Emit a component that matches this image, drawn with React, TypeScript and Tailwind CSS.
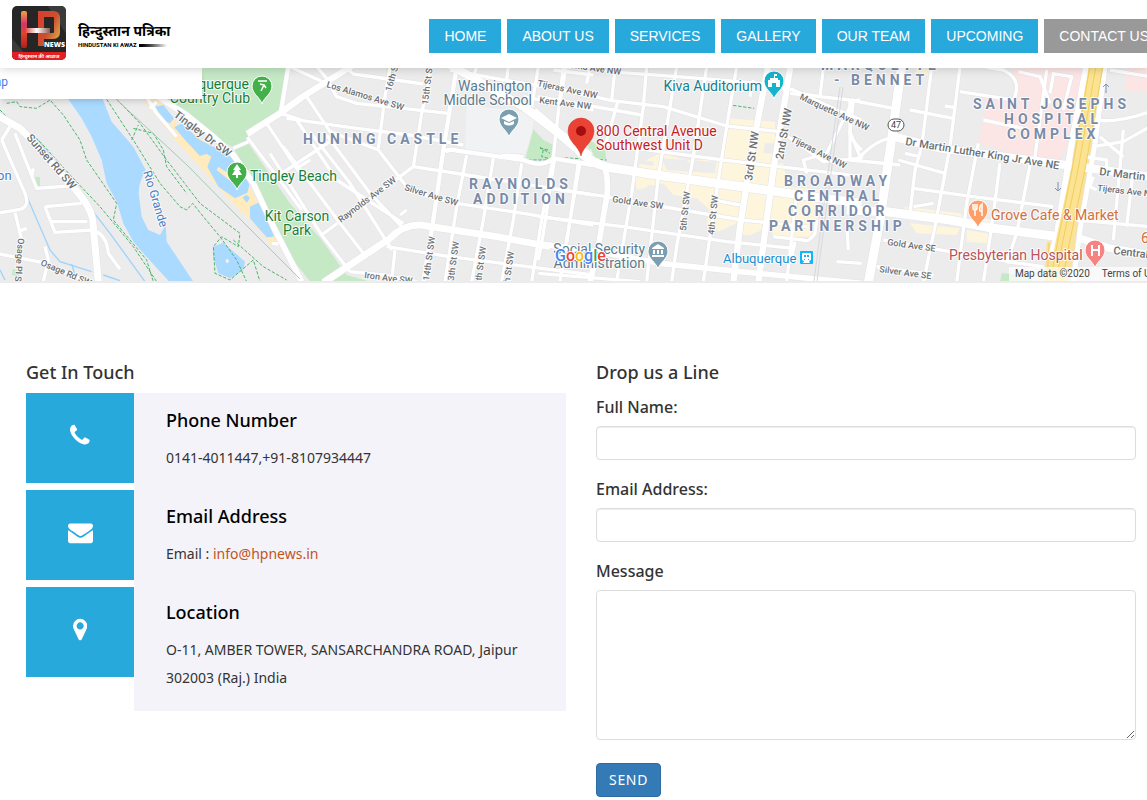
type Area = [fill: string, d: string];
type Road = [width: number, d: string];

interface Tile {
  x: number;
  areas: Area[];
  roads: Road[];
  streams?: string;
  trails?: string;
}

interface Label {
  text: string;
  x: number;
  y: number;
  size?: number;
  color?: string;
  rotate?: number;
  spacing?: number;
  anchor?: "start" | "middle" | "end";
  weight?: number;
}

const WATER = "#aadaff";
const PARK = "#c5e8c5";
const SAND = "#ffebbe";
const SHOPS = "#fdf5dc";
const CLINIC = "#fce5e5";

const ROAD_TEXT = "#6b7074";
const AREA_TEXT = "#7a8ba8";
const PARK_TEXT = "#188038";
const PLACE_TEXT = "#5b7a8c";

// every tile is drawn on a grid three times finer than the map
const tiles: Tile[] = [
  {
    x: 0,
    areas: [
      [WATER, "M200 110L245 175L275 230L305 300L320 370L350 425L370 490L400 545L430 580L508 665H580L500 545L497 495L480 525L445 510L425 470L416 400Q415 370 437 330L400 260L335 185L305 110Z"],
      [PARK, "M600 20H860L838 160L742 222L748 248L700 262L640 230L560 165L490 110Z"],
      [PARK, "M700 262L745 250L870 430L965 540L1040 645L1110 665H930L880 600L810 470L760 370Z"],
      [SAND, "M430 112L480 118L530 190L600 235L700 300L760 400L820 520L835 550L815 558L770 500L680 410L600 320L520 235L440 135Z"],
      [WATER, "M465 140L490 135L522 175L510 190L480 175ZM523 202L545 190L600 240L660 270L715 305L748 375L742 398L705 415L655 380L622 320L634 290L620 282L600 288L560 245ZM750 440L775 428L800 470L822 530L800 532L750 475ZM728 412L740 405L750 414L740 428Z"],
      [SAND, "M655 320L700 350L690 362L650 330Z"],
      [WATER, "M640 560L670 548L735 605L730 630L690 655L655 640L640 590Z"],
      ["#f0f0f0", "M676 600L684 596L688 606L680 610Z"],
      [PARK, "M105 350L120 352L120 382L108 375ZM38 628L60 632L58 650L36 645Z"],
    ],
    roads: [
      [20, "M-10 165L60 205L85 230L200 360Q270 430 278 480L295 665"],
      [9, "M45 220L110 385L205 378M5 240L75 400Q90 440 60 448L-10 460M45 458L65 540M62 512L80 505M135 440L245 430M135 440L165 517L275 510Q320 520 325 580L360 628M150 485L262 485M-10 580L140 610L260 665M135 560L145 600L130 665M5 240L30 200M95 350L100 325"],
      [16, "M470 108L560 165L640 230L700 285L760 370L820 500L905 665"],
      [10, "M440 112L470 160L530 230M450 145L470 125"],
      [12, "M865 20L842 160"],
      [18, "M742 222L840 160L905 112L1060 15"],
      [9, "M742 232L850 375L905 450M800 190L890 325L905 345M842 160L905 180M700 265L745 245M815 550L835 552M870 20L1000 80M890 325L930 300"],
    ],
    streams: "M5 235L150 570L180 605L275 635M110 235L330 520L435 665M0 630L15 660M310 645L360 662M215 612L225 645",
    trails:
      "M0 150L20 170L120 245L215 350L300 440L400 560L470 665M20 130L50 125L60 140L110 145L150 120L190 165L240 240L260 300L350 430L340 480L440 600L460 665M320 118L400 240L480 370L540 440L560 450L578 430L610 470L660 530L710 600L740 665M350 118L420 190L500 300L600 430L720 520L715 560L665 530L640 560L645 640L690 660L760 600L780 665M400 205L460 220L490 270L500 320L560 400M395 240L415 195M700 540L790 620L860 660",
  },
  {
    x: 290,
    areas: [
      ["#f1f2f4", "M530 135L735 160L725 220L702 292L525 272Z"],
      [PARK, "M730 208L760 240L790 255L785 300L705 300Z"],
      [PARK, "M290 22H315L305 60L290 80ZM530 30L562 38V58L535 50ZM895 240L915 250V270L895 265Z"],
    ],
    roads: [
      [20, "M100 668L300 535Q350 485 410 498L620 530L780 560"],
      [9, "M-10 175L200 205L360 225L520 255M110 60L140 110L200 130L475 160M80 20L110 55M165 20L190 42L400 72M50 110L120 215L265 270L350 380Q400 412 500 430L700 460L910 495M20 180L140 360L340 490M-60 280L95 525L180 635M-20 260L150 490L220 580M60 215L180 370L290 545M110 225L240 400L335 500M-40 350L150 225M95 525L370 320L530 345L910 405M330 465L350 450M290 560L480 590L910 645M315 570L305 665M180 635L280 645L380 665M290 540L305 570"],
      [9, "M300 20L285 110L265 265M425 20L395 160L370 320M530 285L500 440L465 665M610 295L580 480L545 665M695 310L670 480L635 665M790 290L755 480L725 665M865 310L840 480L830 550M820 20L790 290M745 20L725 140M655 20L650 60M560 20L550 50"],
      [12, "M500 20L460 270L430 480L400 665"],
      [12, "M465 275Q480 265 500 272L700 300Q760 325 790 295L910 315M625 295Q640 280 700 292"],
      [9, "M480 30L640 60L760 80L910 110M700 110L910 150M790 30L910 45"],
      [24, "M480 15L700 140L800 215L900 290"],
    ],
    trails: "M700 300L785 300L900 310M750 265L775 270M760 270L755 290L775 295",
  },
  {
    x: 540,
    areas: [
      [SHOPS, "M560 175L705 185V240L700 310H730L745 380L840 390L835 470L820 530L700 530L690 500L630 525L600 525L610 480L535 515L500 490L510 450L470 415L400 405L370 370L290 390L285 350L300 310L360 280L440 300L540 300ZM365 295L380 330L525 340L530 300L460 320L440 300Z"],
      ["#ececed", "M675 250H705V280H670ZM300 300L340 305V318L290 310ZM455 300L510 305L480 320L455 318ZM320 375L330 390H280L285 402H360L350 378Z"],
      [PARK, "M145 245L195 265L198 298L165 295ZM-5 240L20 260L40 300L-5 300Z"],
    ],
    roads: [
      [9, "M-5 75L100 95L215 122L370 140L560 198L720 215L775 250L850 305L965 295M-5 110L305 165M125 25L250 38L480 55L660 70L760 90L870 140L965 180M185 250L360 275L550 300L870 338L965 350M-5 380L200 410L340 435L605 480L800 500M-5 470L250 500L560 545L760 565M-5 640L300 665M520 420L600 435M215 122L225 25"],
      [9, "M78 20L60 130M45 290L10 520L-5 600M120 310L80 540L60 665M150 25L140 70M235 120L195 260M320 20L310 140L275 400L230 665M410 20L365 290L355 350L320 665M500 20L460 290L410 560L395 665M590 20L560 200L535 360L490 665M850 25L840 110L780 100M770 400L740 665M640 60L630 110M830 480L825 520Q805 550 790 540L700 530M750 100L930 120M960 120L925 125M800 340L790 300L860 280L940 120L930 220Q940 250 965 270M920 490L925 570M890 605L965 610M765 545L755 595"],
      [16, "M-10 550L200 580L360 610L600 635L965 670"],
      [16, "M195 320Q210 380 195 440L175 560L150 668"],
      [18, "M685 15L640 250L600 500L580 668M752 15L700 330L655 668"],
      [26, "M-20 155L110 265Q160 320 230 326L350 345L640 385L850 415L965 430"],
    ],
    trails: "M575 100L570 135L642 145M570 135L562 195M45 292L200 300M135 265L160 320M0 262L30 280",
  },
  {
    x: 850,
    areas: [
      [CLINIC, "M490 22L700 22L660 240L630 298L555 295L520 285L395 255L385 240L400 180L410 110L490 120ZM830 22H900V95H825Z"],
      [SHOPS, "M165 440L330 460L345 480L165 465ZM180 490L330 505L320 525L200 520ZM350 510L420 522L415 550L350 545ZM370 470L430 480L425 495L370 490ZM200 22L245 30V50L195 40Z"],
      [PARK, "M455 640L540 645L545 668H450Z"],
      ["#fae29c", "M705 20H772L728 300L692 480L655 668H582L590 545H632L665 330Z"],
    ],
    roads: [
      [9, "M0 120L130 145M180 150L310 175M285 138L310 142M245 22L215 260L195 330L180 460M330 20L300 260L255 500L220 668M330 95L490 120Q520 60 460 30L410 22M385 250L350 430L320 668M400 180L520 205M450 310L425 500L400 668M545 290L500 520L470 610M145 300L285 340M190 385L370 410L610 440M0 300L150 315M165 280L210 290M100 540L300 575L480 605M80 620L250 645M590 30L555 290M505 35L570 50L600 130M605 40L665 50L640 150M600 100L610 45M0 215L30 290Q80 240 120 235M0 120L0 300L40 290M470 605L580 620M250 430L190 440M680 480L900 500M820 210L790 540M735 180Q800 190 900 155M730 260L820 245L900 200M700 290L770 300V330M730 350L720 380L740 390M780 30L900 50M750 230L820 290M850 330L830 500"],
      [14, "M765 20L735 250L690 510L670 668"],
      [18, "M710 15L665 250L620 530L600 600"],
      [26, "M155 15L130 200L90 480L55 668"],
      [24, "M130 230L270 265L500 295L700 322L900 350"],
      [26, "M-10 450L110 455L300 480L430 505L630 530"],
      [22, "M690 535L780 565L900 585"],
    ],
  },
];

const labels: Label[] = [
  { text: "HUNING CASTLE", x: 303, y: 144, color: AREA_TEXT, spacing: 4, weight: 700 },
  { text: "RAYNOLDS", x: 469, y: 189, color: AREA_TEXT, spacing: 4, weight: 700 },
  { text: "ADDITION", x: 473, y: 204, color: AREA_TEXT, spacing: 4, weight: 700 },
  { text: "BROADWAY", x: 784, y: 186, color: AREA_TEXT, spacing: 4, weight: 700 },
  { text: "CENTRAL", x: 794, y: 201, color: AREA_TEXT, spacing: 4, weight: 700 },
  { text: "CORRIDOR", x: 788, y: 216, color: AREA_TEXT, spacing: 4, weight: 700 },
  { text: "PARTNERSHIP", x: 769, y: 231, color: AREA_TEXT, spacing: 4, weight: 700 },
  { text: "MARQUETTE", x: 821, y: 70, color: AREA_TEXT, spacing: 4, weight: 700 },
  { text: "- BENNET", x: 834, y: 85, color: AREA_TEXT, spacing: 4, weight: 700 },
  { text: "SAINT JOSEPHS", x: 973, y: 109, color: AREA_TEXT, spacing: 4, weight: 700 },
  { text: "HOSPITAL", x: 1004, y: 124, color: AREA_TEXT, spacing: 4, weight: 700 },
  { text: "COMPLEX", x: 1007, y: 139, color: AREA_TEXT, spacing: 4, weight: 700 },
  { text: "Albuquerque", x: 249, y: 89, color: PARK_TEXT, size: 14, anchor: "end" },
  { text: "Country Club", x: 250, y: 103, color: PARK_TEXT, size: 14, anchor: "end" },
  { text: "Tingley Beach", x: 250, y: 181, color: PARK_TEXT, size: 14 },
  { text: "Kit Carson", x: 297, y: 221, color: PARK_TEXT, size: 14, anchor: "middle" },
  { text: "Park", x: 297, y: 235, color: PARK_TEXT, size: 14, anchor: "middle" },
  { text: "Washington", x: 532, y: 91, color: PLACE_TEXT, size: 14, anchor: "end" },
  { text: "Middle School", x: 532, y: 105, color: PLACE_TEXT, size: 14, anchor: "end" },
  { text: "Social Security", x: 645, y: 254, color: PLACE_TEXT, size: 14, anchor: "end" },
  { text: "Administration", x: 645, y: 268, color: PLACE_TEXT, size: 14, anchor: "end" },
  { text: "Kiva Auditorium", x: 762, y: 91, color: "#12808d", size: 14, anchor: "end" },
  { text: "800 Central Avenue", x: 596, y: 136, color: "#c5221f", size: 14 },
  { text: "Southwest Unit D", x: 596, y: 150, color: "#c5221f", size: 14 },
  { text: "Albuquerque", x: 723, y: 263, color: "#1a8fd1", size: 13 },
  { text: "Grove Cafe & Market", x: 991, y: 220, color: "#d0703c", size: 14 },
  { text: "Presbyterian Hospital", x: 949, y: 260, color: "#b8545a", size: 14 },
  { text: "6", x: 1141, y: 243, color: "#d0703c", size: 14 },
  { text: "on", x: -3, y: 180, color: "#4a7cc0", size: 13 },
  { text: "Rio Grande", x: 143, y: 172, color: "#4a7cc0", size: 12, rotate: 73 },
  { text: "Sunset Rd SW", x: 26, y: 138, size: 11, rotate: 49 },
  { text: "Tingley Dr SW", x: 173, y: 116, size: 11, rotate: 37 },
  { text: "Osage Rd SW", x: 40, y: 265, size: 9, rotate: 23 },
  { text: "Osage Pl SW", x: 18, y: 238, size: 9, rotate: 94 },
  { text: "Los Alamos Ave SW", x: 326, y: 87, size: 9, rotate: 17 },
  { text: "Raynolds Ave SW", x: 341, y: 223, size: 9, rotate: -37 },
  { text: "Silver Ave SW", x: 404, y: 190, size: 9, rotate: 17 },
  { text: "16th St", x: 391, y: 92, size: 9, rotate: -74 },
  { text: "15th St S", x: 428, y: 105, size: 9, rotate: -83 },
  { text: "14th St SW", x: 429, y: 281, size: 9, rotate: -82 },
  { text: "13th St SW", x: 453, y: 286, size: 9, rotate: -82 },
  { text: "12th St SW", x: 480, y: 291, size: 9, rotate: -82 },
  { text: "11th St SW", x: 508, y: 296, size: 9, rotate: -82 },
  { text: "Iron Ave SW", x: 364, y: 278, size: 9, rotate: 7 },
  { text: "Tijeras Ave NW", x: 537, y: 86, size: 9, rotate: 12 },
  { text: "Kent Ave NW", x: 539, y: 103, size: 9, rotate: 7 },
  { text: "Roma Ave NW", x: 564, y: 67, size: 9, rotate: 8 },
  { text: "Gold Ave SW", x: 612, y: 202, size: 9, rotate: 8 },
  { text: "5th St SW", x: 686, y: 231, size: 9, rotate: -84 },
  { text: "4th St SW", x: 714, y: 235, size: 9, rotate: -84 },
  { text: "3rd St NW", x: 752, y: 181, size: 11, rotate: -82 },
  { text: "2nd St NW", x: 783, y: 160, size: 11, rotate: -80 },
  { text: "Marquette Ave NW", x: 799, y: 99, size: 9, rotate: 25 },
  { text: "Tijeras Ave NW", x: 790, y: 141, size: 9, rotate: 27 },
  { text: "Dr Martin Luther King Jr Ave NE", x: 905, y: 145, size: 11, rotate: 9 },
  { text: "Dr Martin Luther King", x: 1099, y: 175, size: 11, rotate: 7 },
  { text: "Tijeras Ave NE", x: 1097, y: 191, size: 9, rotate: 6 },
  { text: "Gold Ave SE", x: 887, y: 245, size: 9, rotate: 8 },
  { text: "Silver Ave SE", x: 879, y: 272, size: 9, rotate: 8 },
  { text: "Central Ave", x: 1113, y: 254, size: 11, rotate: 7 },
];

const navItems = [
  "HOME",
  "ABOUT US",
  "SERVICES",
  "GALLERY",
  "OUR TEAM",
  "UPCOMING",
  "CONTACT US",
];

const icons = {
  phone: {
    width: 1408,
    d: "M1408 296q0 -27 -10 -70.5t-21 -68.5q-21 -50 -122 -106q-94 -51 -186 -51q-27 0 -53 3.5t-57.5 12.5t-47 14.5t-55.5 20.5t-49 18q-98 35 -175 83q-127 79 -264 216t-216 264q-48 77 -83 175q-3 9 -18 49t-20.5 55.5t-14.5 47t-12.5 57.5t-3.5 53q0 92 51 186q56 101 106 122q25 11 68.5 21t70.5 10q14 0 21 -3q18 -6 53 -76q11 -19 30 -54t35 -63.5t31 -53.5q3 -4 17.5 -25t21.5 -35.5t7 -28.5q0 -20 -28.5 -50t-62 -55t-62 -53t-28.5 -46q0 -9 5 -22.5t8.5 -20.5t14 -24t11.5 -19q76 -137 174 -235t235 -174q2 -1 19 -11.5t24 -14t20.5 -8.5t22.5 -5q18 0 46 28.5t53 62t55 62t50 28.5q14 0 28.5 -7t35.5 -21.5t25 -17.5q25 -15 53.5 -31t63.5 -35t54 -30q70 -35 76 -53q3 -7 3 -21z",
  },
  envelope: {
    width: 1792,
    d: "M1792 826v-794q0 -66 -47 -113t-113 -47h-1472q-66 0 -113 47t-47 113v794q44 -49 101 -87q362 -246 497 -345q57 -42 92.5 -65.5t94.5 -48t110 -24.5h1h1q51 0 110 24.5t94.5 48t92.5 65.5q170 123 498 345q57 39 100 87zM1792 1120q0 -79 -49 -151t-122 -123q-376 -261 -468 -325q-10 -7 -42.5 -30.5t-54 -38t-52 -32.5t-57.5 -27t-50 -9h-1h-1q-23 0 -50 9t-57.5 27t-52 32.5t-54 38t-42.5 30.5q-91 64 -262 182.5t-205 142.5q-62 42 -117 115.5t-55 136.5q0 78 41.5 130t118.5 52h1472q65 0 112.5 -47t47.5 -113z",
  },
  marker: {
    width: 1024,
    d: "M768 896q0 106 -75 181t-181 75t-181 -75t-75 -181t75 -181t181 -75t181 75t75 181zM1024 896q0 -109 -33 -179l-364 -774q-16 -33 -47.5 -52t-67.5 -19t-67.5 19t-46.5 52l-365 774q-33 70 -33 179q0 212 150 362t362 150t362 -150t150 -362z",
  },
};

function IconBox({ name }: { name: keyof typeof icons }) {
  const icon = icons[name];
  return (
    <div className="flex h-[90px] items-center justify-center bg-[#27a9dc] pb-1.5">
      <svg
        className="h-[25px] w-auto"
        viewBox={`0 -1536 ${icon.width} 1792`}
        fill="#fff"
        aria-hidden="true"
      >
        <path d={icon.d} transform="scale(1 -1)" />
      </svg>
    </div>
  );
}

function Pin({ x, y, color }: { x: number; y: number; color: string }) {
  return (
    <g transform={`translate(${x} ${y})`}>
      <path
        d="M0 18C-2 11 -10 8 -10 0A10 10 0 0 1 10 0C10 8 2 11 0 18Z"
        fill={color}
        stroke="#fff"
        strokeWidth="1"
      />
    </g>
  );
}

function CityMap() {
  return (
    <svg
      className="block h-[213px] w-full bg-[#ececed]"
      viewBox="0 68 1147 213"
      preserveAspectRatio="xMidYMid slice"
      role="img"
      aria-label="Map"
    >
      {tiles.map((tile) => (
        <g key={tile.x} transform={`translate(${tile.x} 60) scale(0.33333)`}>
          {tile.areas.map(([fill, d]) => (
            <path key={d} d={d} fill={fill} />
          ))}
        </g>
      ))}
      {tiles.map((tile) => (
        <g
          key={tile.x}
          transform={`translate(${tile.x} 60) scale(0.33333)`}
          fill="none"
        >
          {tile.streams && (
            <path d={tile.streams} stroke="#9fd3fb" strokeWidth="4" />
          )}
          {tile.trails && (
            <path
              d={tile.trails}
              stroke="#4db36c"
              strokeWidth="3"
              strokeDasharray="10 5"
            />
          )}
        </g>
      ))}
      {["casing", "surface"].map((layer) =>
        tiles.map((tile) => (
          <g
            key={layer + tile.x}
            transform={`translate(${tile.x} 60) scale(0.33333)`}
            fill="none"
            strokeLinejoin="round"
          >
            {tile.roads.map(([width, d]) => (
              <path
                key={d}
                d={d}
                stroke={layer === "casing" ? "#e2e2e6" : "#fff"}
                strokeWidth={layer === "casing" ? width + 4 : width + 1}
              />
            ))}
          </g>
        ))
      )}

      {/* canal, railway and the interstate */}
      <g fill="none">
        <path d="M117 100L187 165L247 226L300 279" stroke="#a3ccb0" />
        <path d="M840 87L827 180L814 281M843 87L830 180L817 281" stroke="#d6d8dc" />
        <path
          d="M1096 66L1078 170L1062 245L1056 283"
          stroke="#fbe391"
          strokeWidth="14"
        />
        <path
          d="M1090 66L1072 170L1057 245L1050 283M1096 66L1078 170L1062 245L1056 283M1103 66L1085 170L1069 245L1062 283M1049 243L1047 283"
          stroke="#f3cd62"
        />
        <path d="M1058 182V191M1055 188L1058 191L1061 188M1106 93V84M1103 87L1106 84L1109 87" stroke="#7f90b3" />
      </g>

      <rect x="888" y="119" width="16" height="12" rx="6" fill="#fff" stroke="#555" />

      <g fontFamily="Roboto, sans-serif" paintOrder="stroke" strokeLinejoin="round">
        {labels.map((label) => (
          <text
            key={`${label.text}${label.x}`}
            x={label.x}
            y={label.y}
            fontSize={label.size ?? 14}
            fontWeight={label.weight ?? (label.color ? 400 : 500)}
            fill={label.color ?? ROAD_TEXT}
            stroke="#fff"
            strokeOpacity="0.85"
            strokeWidth="2"
            letterSpacing={label.spacing}
            textAnchor={label.anchor ?? "start"}
            transform={
              label.rotate
                ? `rotate(${label.rotate} ${label.x} ${label.y})`
                : undefined
            }
          >
            {label.text}
          </text>
        ))}
        <text x="896" y="128" fontSize="9" textAnchor="middle" fill="#444">
          47
        </text>
        <text
          x="555"
          y="261"
          fontSize="16"
          fontWeight="500"
          stroke="#fff"
          strokeWidth="2"
        >
          <tspan fill="#4285f4">G</tspan>
          <tspan fill="#ea4335">o</tspan>
          <tspan fill="#fbbc05">o</tspan>
          <tspan fill="#4285f4">g</tspan>
          <tspan fill="#34a853">l</tspan>
          <tspan fill="#ea4335">e</tspan>
        </text>
      </g>

      <Pin x={262} y={86} color="#43b04a" />
      <path d="M258 81H267M260 84L264 85L261 91M264 85L266 88" stroke="#fff" strokeWidth="1.5" fill="none" />
      <Pin x={237} y={172} color="#43b04a" />
      <path d="M237 164L241 170H239L242 175H238V178H236V175H232L235 170H233Z" fill="#fff" />
      <Pin x={509} y={119} color="#7b9eb0" />
      <path d="M509 114L517 118L509 122L501 118ZM504 121L509 123L514 121V124Q509 127 504 124Z" fill="#fff" />
      <Pin x={658} y={251} color="#7b9eb0" />
      <path d="M652 248L658 244L664 248V249H652ZM653 250H655V254H653ZM657 250H659V254H657ZM661 250H663V254H661ZM652 255H664V257H652Z" fill="#fff" />
      <Pin x={774} y={81} color="#12b5cb" />
      <path d="M774 74H777V76H775V78H778V80H780V87H776V83H772V87H768V80H770V78H774Z" fill="#fff" />
      <Pin x={978} y={210} color="#ff9e67" />
      <path d="M973 204V208Q973 210 975 210V216M977 204V208Q977 210 975 210V204M982 216V204Q979 206 980 211H982" stroke="#fff" strokeWidth="1.5" fill="none" />
      <Pin x={1095} y={250} color="#f88181" />
      <path d="M1092 245V256M1099 245V256M1092 250H1099" stroke="#fff" strokeWidth="2" fill="none" />

      <rect x="800" y="251" width="13" height="13" rx="1" fill="#12b5f5" />
      <path d="M803 253H810Q811 253 811 254V260L809 261L810 263H803L804 261L802 260V254Q802 253 803 253Z" fill="#fff" />
      <path d="M804 255H806V257H804ZM807 255H809V257H807ZM804 259H805V260H804ZM808 259H809V260H808Z" fill="#12b5f5" />

      <path
        d="M581 156C579 146 568 142 568 131A13 13 0 0 1 594 131C594 142 583 146 581 156Z"
        fill="#ea4335"
        stroke="#d33426"
        strokeWidth="0.5"
      />
      <circle cx="581" cy="131" r="5" fill="#a50e0e" />
    </svg>
  );
}

function Logo() {
  return (
    <a
      href="#"
      className="flex items-center gap-[11px] pb-0.5"
      aria-label="HP News"
    >
      <svg className="h-[56px] w-[56px]" viewBox="0 0 56 56">
        <defs>
          <linearGradient id="barLeft" x1="0" y1="0" x2="0" y2="1">
            <stop offset="0" stopColor="#f0a33c" />
            <stop offset="0.35" stopColor="#d8326a" />
            <stop offset="0.6" stopColor="#e0452c" />
            <stop offset="1" stopColor="#b01f1f" />
          </linearGradient>
          <linearGradient id="barRight" x1="0" y1="0" x2="1" y2="1">
            <stop offset="0" stopColor="#d6402c" />
            <stop offset="0.5" stopColor="#c9502f" />
            <stop offset="1" stopColor="#e0b04b" />
          </linearGradient>
          <linearGradient id="bridge" x1="0" y1="0" x2="1" y2="0">
            <stop offset="0" stopColor="#d8574c" />
            <stop offset="0.45" stopColor="#fff" />
            <stop offset="1" stopColor="#8f5a50" />
          </linearGradient>
          <clipPath id="badge">
            <rect x="1" y="1" width="54" height="54" rx="5" />
          </clipPath>
        </defs>
        <g clipPath="url(#badge)">
          <rect width="56" height="56" fill="#262626" />
          <path d="M0 32L20 56H0ZM36 0H56V30Z" fill="#3b3b3b" />
          <rect y="47" width="56" height="9" fill="#e3201f" />
          <rect x="10" y="6" width="6" height="37" rx="2" fill="url(#barLeft)" />
          <path
            d="M30 41V9H42Q46 9 46 13V27Q46 31 42 31H33"
            fill="none"
            stroke="url(#barRight)"
            strokeWidth="6"
          />
          <rect x="15" y="23" width="24" height="5" fill="url(#bridge)" />
        </g>
        <text
          x="33"
          y="42"
          fontFamily="'Open Sans', sans-serif"
          fontSize="7"
          fontWeight="800"
          fill="#fff"
        >
          NEWS
        </text>
        <text
          x="28"
          y="53"
          textAnchor="middle"
          fontFamily="'Noto Sans Devanagari', 'Noto Sans', sans-serif"
          fontSize="5"
          fontWeight="700"
          fill="#fff"
        >
          हिन्दुस्तान की आवाज
        </text>
      </svg>
      <div className="pt-1 font-['Noto_Sans_Devanagari','Noto_Sans',sans-serif] text-black">
        <div className="text-sm leading-5 font-bold whitespace-nowrap">
          हिन्दुस्तान पत्रिका
        </div>
        <div className="flex items-center gap-0.5 font-[Roboto,sans-serif] text-[6px] leading-1 font-bold whitespace-nowrap">
          HINDUSTAN KI AWAZ
          <span className="h-[3px] w-7 bg-linear-to-r from-black to-white"></span>
        </div>
      </div>
    </a>
  );
}

export default function App() {
  return (
    <div className="overflow-hidden bg-white font-['Noto_Sans',sans-serif] text-[#333]">
      <header className="relative z-10 flex h-[68px] items-center bg-white pl-[11px] shadow-[0_0_10px_rgba(0,0,0,0.2)]">
        <Logo />
        <nav className="-mr-[17px] ml-auto flex gap-1.5 pt-1">
          {navItems.map((item) => (
            <a
              key={item}
              href="#"
              className={`px-[15px] py-[7px] font-['Liberation_Sans',sans-serif] text-sm leading-5 whitespace-nowrap text-white ${
                item === "CONTACT US" ? "bg-[#999]" : "bg-[#27a9dc]"
              }`}
            >
              {item}
            </a>
          ))}
        </nav>
      </header>

      <section className="relative border-b-2 border-[#ececec] font-[Roboto,sans-serif]">
        <CityMap />
        <div className="absolute top-0 left-0 h-[31px] w-[202px] bg-white shadow-md">
          <div className="flex w-2 justify-end overflow-hidden">
            <a
              href="#"
              className="text-xs leading-7 whitespace-nowrap text-[#427fed]"
            >
              View larger map
            </a>
          </div>
        </div>
        <div className="absolute -right-5 bottom-0 flex bg-white/70 text-[10px] leading-[14px] whitespace-nowrap text-[#444]">
          <span className="px-1.5">Map data ©2020</span>
          <a href="#" className="px-1.5">
            Terms of Use
          </a>
        </div>
      </section>

      <main className="grid grid-cols-2 gap-[30px] pt-[79px] pr-[11px] pb-1 pl-[26px]">
        <section>
          <h4 className="mb-[11px] text-lg leading-5 font-medium">
            Get In Touch
          </h4>
          <div className="flex">
            <div className="flex w-1/5 flex-col gap-[7px]">
              <IconBox name="phone" />
              <IconBox name="envelope" />
              <IconBox name="marker" />
            </div>
            <div className="flex w-4/5 flex-col gap-[34px] bg-[#f4f3fa] px-8 pt-[17px] pb-[19px]">
              <div>
                <h4 className="mb-3.5 text-lg leading-5 font-medium text-black">
                  Phone Number
                </h4>
                <p className="text-sm leading-7">0141-4011447,+91-8107934447</p>
              </div>
              <div>
                <h4 className="mb-3.5 text-lg leading-5 font-medium text-black">
                  Email Address
                </h4>
                <p className="text-sm leading-7">
                  Email :{" "}
                  <a href="mailto:info@hpnews.in" className="text-[#c1561c]">
                    info@hpnews.in
                  </a>
                </p>
              </div>
              <div>
                <h4 className="mb-3.5 text-lg leading-5 font-medium text-black">
                  Location
                </h4>
                <p className="text-sm leading-7">
                  O-11, AMBER TOWER, SANSARCHANDRA ROAD, Jaipur 302003 (Raj.)
                  India
                </p>
              </div>
            </div>
          </div>
        </section>

        <section>
          <h4 className="mb-3.5 text-lg leading-5 font-medium">
            Drop us a Line
          </h4>
          <form>
            <label
              htmlFor="name"
              className="mb-2 block text-base leading-[22px] font-medium"
            >
              Full Name:
            </label>
            <input
              id="name"
              type="text"
              className="mb-[18px] block h-[34px] w-full rounded border border-[#ddd] px-3 text-sm shadow-[inset_0_1px_1px_rgba(0,0,0,0.075)]"
            />
            <label
              htmlFor="email"
              className="mb-2 block text-base leading-[22px] font-medium"
            >
              Email Address:
            </label>
            <input
              id="email"
              type="email"
              className="mb-[18px] block h-[34px] w-full rounded border border-[#ddd] px-3 text-sm shadow-[inset_0_1px_1px_rgba(0,0,0,0.075)]"
            />
            <label
              htmlFor="message"
              className="mb-2 block text-base leading-[22px] font-medium"
            >
              Message
            </label>
            <textarea
              id="message"
              className="mb-[23px] block h-[150px] w-full rounded border border-[#ddd] px-3 py-1.5 text-sm"
            ></textarea>
            <button
              type="submit"
              className="rounded border border-[#2e6da4] bg-[#337ab7] px-3 py-1.5 text-sm leading-5 tracking-wider text-white"
            >
              SEND
            </button>
          </form>
        </section>
      </main>
    </div>
  );
}
